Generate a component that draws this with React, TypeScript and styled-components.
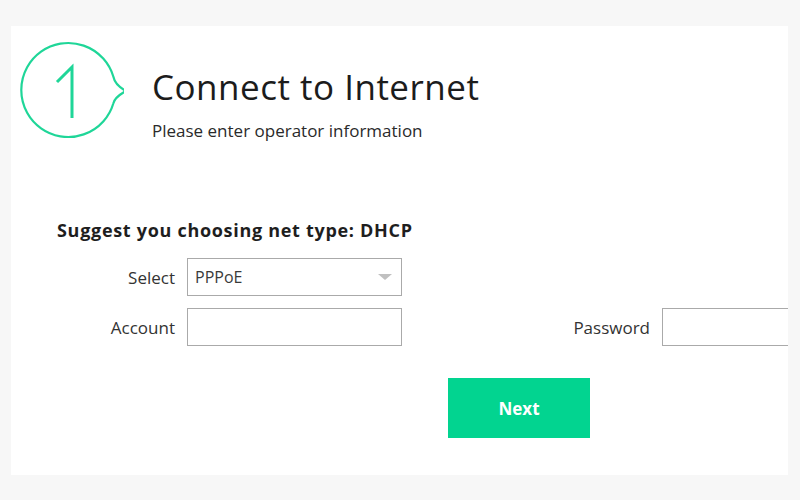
import styled, { createGlobalStyle } from 'styled-components';

const GlobalStyle = createGlobalStyle`
  html, body {
    margin: 0;
    padding: 0;
    background: #f7f7f7;
  }
  body {
    font-family: 'Open Sans', 'Noto Sans', sans-serif;
    color: #222;
  }
`;

const StepBadge = () => (
  <svg width="112" height="100" viewBox="0 0 112 100">
    <path
      d="M 101.4 35.8 A 47 47 0 1 0 101.4 62.2 Q 103 56 114 50 Q 103 44 101.4 35.8 Z"
      fill="none"
      stroke="#1fd698"
      strokeWidth="2.2"
      strokeLinejoin="round"
    />
    <path
      d="M 45 41 L 60 26 L 60 77"
      fill="none"
      stroke="#1fd698"
      strokeWidth="3"
    />
  </svg>
);

const Arrow = () => (
  <svg width="14" height="7" viewBox="0 0 14 7">
    <path d="M0 0 L14 0 L7 6 Z" fill="#c0c0c0" />
  </svg>
);

const App = () => {
  return (
    <>
      <GlobalStyle />
      <Page>
        <Panel>
          <Header>
            <BadgeWrap>
              <StepBadge />
            </BadgeWrap>
            <TitleBlock>
              <Title>Connect to Internet</Title>
              <Subtitle>Please enter operator information</Subtitle>
            </TitleBlock>
          </Header>

          <Form>
            <Suggest>Suggest you choosing net type: DHCP</Suggest>
            <Row>
              <Label $width={176}>Select</Label>
              <SelectBox>
                <span>PPPoE</span>
                <Arrow />
              </SelectBox>
            </Row>
            <Row>
              <Label $width={176}>Account</Label>
              <Input />
              <Label $width={260}>Password</Label>
              <Input $wide />
            </Row>
            <ButtonRow>
              <NextButton>Next</NextButton>
            </ButtonRow>
          </Form>
        </Panel>
      </Page>
    </>
  );
};

export default App;

const Page = styled.div`
  width: 800px;
  height: 500px;
  padding: 26px 12px 25px 11px;
  box-sizing: border-box;
`;

const Panel = styled.div`
  width: 777px;
  height: 449px;
  background: #ffffff;
  overflow: hidden;
`;

const Header = styled.div`
  display: flex;
  align-items: flex-start;
  padding-top: 15px;
`;

const BadgeWrap = styled.div`
  width: 141px;
  padding-left: 1px;
  box-sizing: border-box;
  svg {
    display: block;
  }
`;

const TitleBlock = styled.div`
  display: flex;
  flex-direction: column;
  padding-top: 24px;
`;

const Title = styled.h1`
  margin: 0;
  font-size: 35px;
  font-weight: 400;
  letter-spacing: 0.5px;
  line-height: 44px;
  color: #1c1c1c;
`;

const Subtitle = styled.p`
  margin: 10px 0 0;
  font-size: 17px;
  line-height: 23px;
  color: #2a2a2a;
`;

const Form = styled.div`
  display: flex;
  flex-direction: column;
  padding-top: 76px;
`;

const Suggest = styled.div`
  padding-left: 46px;
  font-size: 18px;
  font-weight: 700;
  letter-spacing: 0.7px;
  line-height: 24px;
  color: #1e1e1e;
  margin-bottom: 16px;
`;

const Row = styled.div`
  display: flex;
  align-items: center;
  margin-bottom: 12px;
`;

const Label = styled.label<{ $width: number }>`
  width: ${({ $width }) => $width}px;
  flex-shrink: 0;
  padding-right: 12px;
  box-sizing: border-box;
  text-align: right;
  font-size: 17px;
  color: #333;
`;

const SelectBox = styled.div`
  width: 215px;
  height: 38px;
  flex-shrink: 0;
  box-sizing: border-box;
  border: 1px solid #aaaaaa;
  display: flex;
  align-items: center;
  justify-content: space-between;
  padding: 0 9px 0 7px;
  font-size: 16px;
  color: #3a3a3a;
`;

const Input = styled.input<{ $wide?: boolean }>`
  width: ${({ $wide }) => ($wide ? 200 : 215)}px;
  height: 38px;
  flex-shrink: 0;
  box-sizing: border-box;
  border: 1px solid #aaaaaa;
  background: #fff;
  outline: none;
  padding: 0 6px;
  font-size: 16px;
`;

const ButtonRow = styled.div`
  display: flex;
  padding-left: 437px;
  margin-top: 20px;
`;

const NextButton = styled.button`
  width: 142px;
  height: 60px;
  border: none;
  background: #02d490;
  color: #fff;
  font-family: inherit;
  font-size: 17px;
  font-weight: 700;
  cursor: pointer;
`;
